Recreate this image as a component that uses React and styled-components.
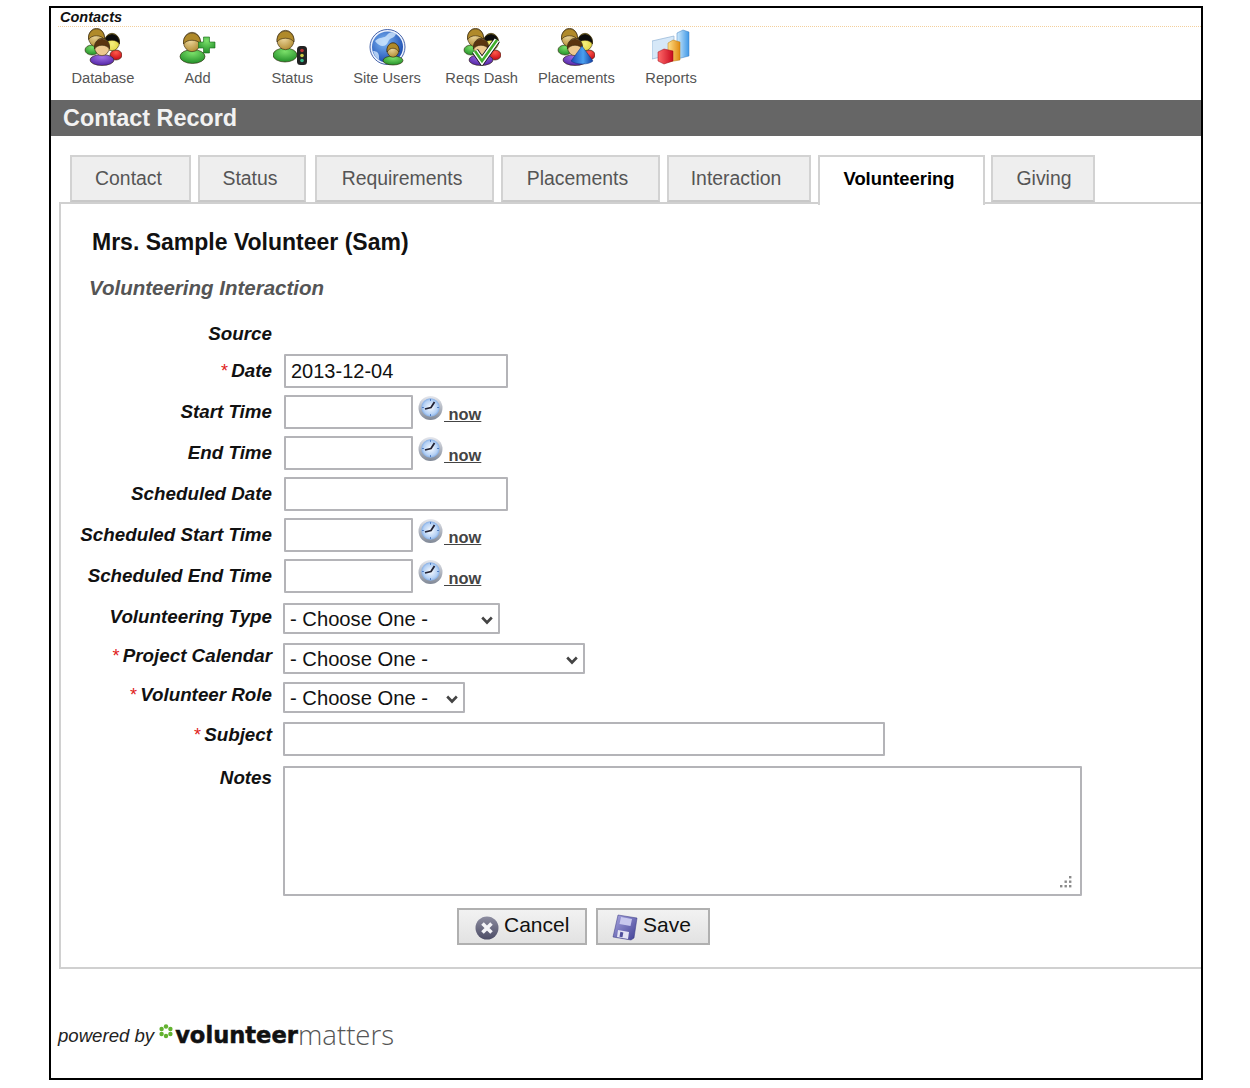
import styled, { createGlobalStyle } from "styled-components";

const GlobalStyle = createGlobalStyle`
	html, body {
		margin: 0;
		padding: 0;
		background: #fff;
		font-family: "Liberation Sans", Arial, sans-serif;
	}
`;

const Page = styled.div`
	padding: 6px 0 0 49px;
`;

const Frame = styled.div`
	box-sizing: border-box;
	width: 1154px;
	height: 1074px;
	border: 2px solid #000;
	display: flex;
	flex-direction: column;
`;

const Toolbar = styled.div`
	height: 92px;
	flex-shrink: 0;
`;

const ToolbarTitle = styled.div`
	margin-left: 7px;
	padding-left: 2px;
	height: 18px;
	line-height: 18px;
	font-size: 14.5px;
	font-weight: bold;
	font-style: italic;
	color: #111;
	border-bottom: 1px dotted #f3cf9c;
`;

const ToolRow = styled.div`
	display: grid;
	grid-template-columns: repeat(7, 94.7px);
	padding: 1px 0 0 4.6px;
`;

const ToolItem = styled.a`
	display: flex;
	flex-direction: column;
	align-items: center;
	gap: 3px;
	font-size: 14.7px;
	line-height: 18px;
	color: #555;
	white-space: nowrap;
	cursor: pointer;
`;

const HeaderBar = styled.div`
	height: 36px;
	flex-shrink: 0;
	padding-left: 12px;
	background: #666;
	color: #f2f2f2;
	font-size: 23.4px;
	font-weight: bold;
	line-height: 37px;
`;

const Tabs = styled.div`
	display: flex;
	gap: 7px;
	margin: 19px 0 0 19px;
	height: 47px;
`;

const Tab = styled.div`
	box-sizing: border-box;
	width: ${(p) => p.$w}px;
	height: ${(p) => (p.$active ? 50 : 47)}px;
	margin-right: ${(p) => p.$after || 0}px;
	padding: 0 ${(p) => p.$right ?? 4}px 0 ${(p) => p.$left || 0}px;
	border: 2px solid #d2d2d2;
	border-bottom: ${(p) => (p.$active ? "none" : "2px solid #c8c8c8")};
	background: ${(p) => (p.$active ? "#fff" : "#eee")};
	color: ${(p) => (p.$active ? "#000" : "#555")};
	font-size: ${(p) => (p.$active ? 18.4 : 19.4)}px;
	font-weight: ${(p) => (p.$active ? "bold" : "normal")};
	line-height: 43px;
	text-align: center;
	position: relative;
	z-index: 1;
`;

const Panel = styled.div`
	margin-left: 8px;
	padding: 25px 0 22px 0;
	border: 2px solid #d0d0d0;
	border-right: none;
	box-sizing: border-box;
`;

const RecordName = styled.h1`
	margin: 0 0 0 31px;
	font-size: 23px;
	font-weight: bold;
	line-height: 26px;
	color: #111;
`;

const SectionTitle = styled.h2`
	margin: 20px 0 22px 28px;
	font-size: 20.5px;
	font-weight: bold;
	font-style: italic;
	line-height: 26px;
	color: #555;
`;

const Row = styled.div`
	display: grid;
	grid-template-columns: 211px 1fr;
	column-gap: 11px;
	margin-top: ${(p) => p.$top || 0}px;
`;

const Label = styled.label`
	padding-top: ${(p) => p.$pad || 0}px;
	font-size: 18.8px;
	font-weight: bold;
	font-style: italic;
	line-height: 22px;
	text-align: right;
	color: #111;
	white-space: nowrap;
`;

const Required = styled.span`
	color: #e02020;
	font-size: 18px;
	font-weight: normal;
	margin-right: 4px;
`;

const Field = styled.div`
	display: flex;
	align-items: flex-start;
	gap: 5px;
	position: relative;
`;

const TextInput = styled.input`
	box-sizing: border-box;
	width: ${(p) => p.$w}px;
	height: 34px;
	margin-left: ${(p) => p.$left || 0}px;
	padding: 2px 5px;
	border: 2px solid #b4b4b8;
	border-radius: 1px;
	background: #fff;
	color: #111;
	font-family: "Liberation Sans", Arial, sans-serif;
	font-size: 20px;
	outline: none;
`;

const chevron =
	"data:image/svg+xml;utf8,<svg xmlns='http://www.w3.org/2000/svg' width='12' height='9'><path d='M1.2 1.5L6 6.5L10.8 1.5' fill='none' stroke='%23444' stroke-width='2.6'/></svg>";

const Select = styled.select`
	box-sizing: border-box;
	appearance: none;
	width: ${(p) => p.$w}px;
	height: 31px;
	padding: 0 5px;
	border: 2px solid #b4b4b8;
	border-radius: 1px;
	background: #fff url("${chevron}") no-repeat right 5px top 11px;
	color: #111;
	font-family: "Liberation Sans", Arial, sans-serif;
	font-size: 20.2px;
	outline: none;
`;

const Notes = styled.textarea`
	box-sizing: border-box;
	display: block;
	width: 799px;
	height: 130px;
	border: 2px solid #b4b4b8;
	border-radius: 1px;
	background: #fff;
	outline: none;
	resize: none;
`;

const Grip = styled.svg`
	position: absolute;
	left: 776px;
	top: 109px;
	width: 14px;
	height: 14px;
`;

const NowLink = styled.a`
	margin: 9px 0 0 -4px;
	font-size: 16.4px;
	font-weight: bold;
	line-height: 20px;
	color: #444;
	text-decoration: underline;
	white-space: pre;
	cursor: pointer;
`;

const Actions = styled.div`
	display: flex;
	gap: 9px;
	margin: 12px 0 0 396px;
`;

const ActionButton = styled.button`
	box-sizing: border-box;
	display: flex;
	align-items: center;
	width: ${(p) => p.$w}px;
	height: 37px;
	padding: 0 0 3px ${(p) => p.$pad}px;
	gap: 5px;
	border: 2px solid #b0b0b0;
	background: linear-gradient(#f2f2f2, #e2e2e2);
	color: #111;
	font-family: "Liberation Sans", Arial, sans-serif;
	font-size: 21px;
	cursor: pointer;
`;

const Footer = styled.div`
	display: flex;
	align-items: flex-end;
	margin: 52px 0 0 7px;
`;

const PoweredBy = styled.span`
	font-size: 18.6px;
	font-style: italic;
	line-height: 24px;
	color: #222;
	margin-right: 5px;
`;

const LogoBold = styled.span`
	font-family: "DejaVu Sans", sans-serif;
	font-size: 22.6px;
	font-weight: bold;
	line-height: 26px;
	color: #111;
	-webkit-text-stroke: 0.5px #111;
	margin-left: 2px;
`;

const LogoLight = styled.span`
	font-family: "Open Sans", sans-serif;
	font-size: 27.6px;
	font-weight: 300;
	line-height: 26px;
	color: #555;
	margin-bottom: 1px;
`;

const SvgDefs = styled.svg`
	position: absolute;
	width: 0;
	height: 0;
`;

const Defs = () => (
	<SvgDefs aria-hidden="true">
		<defs>
			<radialGradient id="skin" cx="40%" cy="35%" r="70%">
				<stop offset="0" stopColor="#f3dfa8" />
				<stop offset="1" stopColor="#b08a30" />
			</radialGradient>
			<radialGradient id="blonde" cx="50%" cy="60%" r="60%">
				<stop offset="0" stopColor="#f7f080" />
				<stop offset="1" stopColor="#dccf30" />
			</radialGradient>
			<radialGradient id="green" cx="50%" cy="25%" r="80%">
				<stop offset="0" stopColor="#7be06a" />
				<stop offset="1" stopColor="#1c8a24" />
			</radialGradient>
			<radialGradient id="red" cx="50%" cy="25%" r="80%">
				<stop offset="0" stopColor="#ff5a4a" />
				<stop offset="1" stopColor="#c00010" />
			</radialGradient>
			<radialGradient id="purple" cx="50%" cy="25%" r="80%">
				<stop offset="0" stopColor="#a070e8" />
				<stop offset="1" stopColor="#4d1fa0" />
			</radialGradient>
			<radialGradient id="globe" cx="40%" cy="35%" r="75%">
				<stop offset="0" stopColor="#7fb8f5" />
				<stop offset="1" stopColor="#0f3fa8" />
			</radialGradient>
			<linearGradient id="cone" x1="0" y1="0" x2="1" y2="0">
				<stop offset="0" stopColor="#1a48b8" />
				<stop offset="0.55" stopColor="#4aa0f0" />
				<stop offset="1" stopColor="#0f3a9c" />
			</linearGradient>
			<radialGradient id="clockFace" cx="50%" cy="50%" r="55%">
				<stop offset="0" stopColor="#f8fbff" />
				<stop offset="0.7" stopColor="#b4d0f4" />
				<stop offset="1" stopColor="#6f9fe0" />
			</radialGradient>
			<linearGradient id="clockRim" x1="0" y1="0" x2="0" y2="1">
				<stop offset="0" stopColor="#e6e8ee" />
				<stop offset="1" stopColor="#808896" />
			</linearGradient>
			<linearGradient id="cancelFill" x1="0" y1="0" x2="0" y2="1">
				<stop offset="0" stopColor="#8d8da0" />
				<stop offset="1" stopColor="#4c4c66" />
			</linearGradient>
			<linearGradient id="floppy" x1="0" y1="0" x2="1" y2="1">
				<stop offset="0" stopColor="#a9a6e0" />
				<stop offset="1" stopColor="#3f3f94" />
			</linearGradient>
			<linearGradient id="barBlue" x1="0" y1="0" x2="1" y2="0">
				<stop offset="0" stopColor="#cfeafc" />
				<stop offset="1" stopColor="#3f98e6" />
			</linearGradient>
			<linearGradient id="barOrange" x1="0" y1="0" x2="1" y2="0">
				<stop offset="0" stopColor="#ffe08a" />
				<stop offset="1" stopColor="#e08a10" />
			</linearGradient>
			<linearGradient id="barRed" x1="0" y1="0" x2="1" y2="0">
				<stop offset="0" stopColor="#ff6a6a" />
				<stop offset="1" stopColor="#c80a1e" />
			</linearGradient>
		</defs>
	</SvgDefs>
);

// head at (x, y), body ellipse at (bx, by)
const Person = ({ x, y, r = 8.5, bx, by, bw = 10, bh = 6, body = "green", skin = "url(#skin)", hair = "#b08a2a" }) => (
	<g stroke="#33240c" strokeWidth="0.6">
		<ellipse cx={bx} cy={by} rx={bw} ry={bh} fill={`url(#${body})`} />
		<ellipse cx={x} cy={y} rx={r} ry={r + 1.2} fill={skin} />
		<path
			d={`M${x - r} ${y + 2} C${x - r - 1} ${y - r - 4} ${x + r + 1} ${y - r - 4} ${x + r} ${y + 2} C${x + r - 3} ${y - 3} ${x - r + 3} ${y - 3} ${x - r} ${y + 2}Z`}
			fill={hair}
		/>
	</g>
);

const Crowd = () => (
	<>
		<Person x={28} y={14} r={7.5} bx={32} by={27} bw={6} bh={5} body="red" skin="url(#blonde)" hair="#0c0c0c" />
		<Person x={12.5} y={9.5} r={8} bx={8} by={22} bw={7} bh={5} body="green" />
		<Person x={18} y={19} r={7.5} bx={18} by={32} bw={12} bh={5.5} body="purple" skin="#edc88f" hair="#5a3410" />
	</>
);

const DatabaseIcon = () => (
	<svg width="38" height="38" viewBox="0 0 38 38">
		<Crowd />
	</svg>
);

const AddIcon = () => (
	<svg width="38" height="38" viewBox="0 0 38 38">
		<Person x={13} y={14} bx={13.5} by={28.5} bw={12.5} bh={7} />
		<path d="M24.5 9h6v5h5.5v6h-5.5v5h-6v-5h-5v-6h5z" fill="url(#green)" stroke="#1a6a1a" strokeWidth="0.6" />
	</svg>
);

const StatusIcon = () => (
	<svg width="38" height="38" viewBox="0 0 38 38">
		<Person x={12.5} y={12} bx={12} by={27} bw={12} bh={7} />
		<rect x="24" y="18" width="10" height="19" rx="3.5" fill="#222" />
		<circle cx="29" cy="22.5" r="1.8" fill="#b33" />
		<circle cx="29" cy="27.5" r="1.8" fill="#cc4" />
		<circle cx="29" cy="32.5" r="1.8" fill="#3b8" />
	</svg>
);

const SiteUsersIcon = () => (
	<svg width="38" height="38" viewBox="0 0 38 38">
		<circle cx="19.5" cy="19" r="17.5" fill="#eef4ff" stroke="#1c3f94" strokeWidth="0.8" />
		<circle cx="19.5" cy="19" r="15.5" fill="url(#globe)" />
		<path d="M7 13c5-5 9-2 12-6s6-3 9-1c-2 5-6 3-8 8s-8 6-13-1zM5 23c4 0 6 2 6 6s1 2 0 3c-3-2-5-5-6-9z" fill="#d8ecff" opacity="0.75" />
		<Person x={25} y={22} r={6} bx={25} by={32.5} bw={10} bh={4.5} />
	</svg>
);

const ReqsIcon = () => (
	<svg width="38" height="38" viewBox="0 0 38 38">
		<Crowd />
		<path d="M12 23l7 10L34 12" fill="none" stroke="#111" strokeWidth="7" />
		<path d="M12 23l7 10L34 12" fill="none" stroke="#fff" strokeWidth="5.4" />
		<path d="M12 23l7 10L34 12" fill="none" stroke="#3fae2a" strokeWidth="2.6" />
	</svg>
);

const PlacementsIcon = () => (
	<svg width="38" height="38" viewBox="0 0 38 38">
		<Crowd />
		<path d="M25 18L36 33c-4 4-17 4-22 0z" fill="url(#cone)" stroke="#0c2f80" strokeWidth="0.5" />
	</svg>
);

const ReportsIcon = () => (
	<svg width="38" height="38" viewBox="0 0 38 38">
		<path d="M0 13l22-5v18L0 31z" fill="#d6e8f8" stroke="#8fb2d4" strokeWidth="0.7" />
		<path d="M25 5l6-3 6 2v24l-12 3z" fill="url(#barBlue)" stroke="#3c7fc0" strokeWidth="0.5" />
		<path d="M16 15l5-3 7 2v18l-12 2z" fill="url(#barOrange)" stroke="#b87a10" strokeWidth="0.5" />
		<path d="M6 24l6-3 9 2v10l-9 3-6-3z" fill="url(#barRed)" stroke="#9a0a18" strokeWidth="0.5" />
	</svg>
);

const ClockIcon = () => (
	<svg width="25" height="26" viewBox="0 0 25 26">
		<circle cx="12.5" cy="13" r="12" fill="url(#clockRim)" />
		<circle cx="12.5" cy="12.5" r="9.2" fill="url(#clockFace)" />
		<path d="M7 14L13 12.5L16.5 7" fill="none" stroke="#223" strokeWidth="1.8" />
		<path d="M12.5 4v2M12.5 19v2M4 12.5h2M19 12.5h2" stroke="#3f6fb8" strokeWidth="0.8" />
	</svg>
);

const CancelIcon = () => (
	<svg width="24" height="24" viewBox="0 0 24 24" style={{ marginTop: 5 }}>
		<circle cx="12" cy="12" r="11.5" fill="url(#cancelFill)" />
		<path d="M7.5 7.5l9 9M16.5 7.5l-9 9" stroke="#f4f4f8" strokeWidth="3.6" />
	</svg>
);

const SaveIcon = () => (
	<svg width="26" height="27" viewBox="0 0 26 27" style={{ marginTop: 5 }}>
		<path d="M6 1l19 3-3 20-3 2L1 23z" fill="url(#floppy)" stroke="#35357f" strokeWidth="0.5" />
		<path d="M9 3l11 2-1.5 7L7.5 10z" fill="#c8c8ee" />
		<path d="M6 16l11 2-1 7-11-2z" fill="#e4e4f4" />
		<rect x="8" y="18" width="3" height="5" fill="#50509c" transform="rotate(10 9 20)" />
	</svg>
);

const FlowerIcon = () => (
	<svg width="14" height="15" viewBox="0 0 14 15" style={{ marginBottom: 9 }}>
		<g fill="#62b22f">
			<circle cx="7" cy="2.5" r="2.2" />
			<circle cx="7" cy="12" r="2.2" />
			<circle cx="2.6" cy="5" r="2.2" />
			<circle cx="11.4" cy="5" r="2.2" />
			<circle cx="2.6" cy="10" r="2.2" />
			<circle cx="11.4" cy="10" r="2.2" />
		</g>
		<circle cx="7" cy="7.3" r="1.4" fill="#fff" />
	</svg>
);

const TOOLS = [
	{ label: "Database", Icon: DatabaseIcon },
	{ label: "Add", Icon: AddIcon },
	{ label: "Status", Icon: StatusIcon },
	{ label: "Site Users", Icon: SiteUsersIcon },
	{ label: "Reqs Dash", Icon: ReqsIcon },
	{ label: "Placements", Icon: PlacementsIcon },
	{ label: "Reports", Icon: ReportsIcon },
];

const TABS = [
	{ label: "Contact", w: 121 },
	{ label: "Status", w: 108, after: 2 },
	{ label: "Requirements", w: 179, right: 5 },
	{ label: "Placements", w: 159, right: 6 },
	{ label: "Interaction", w: 144, right: 6 },
	{ label: "Volunteering", w: 167, active: true, after: -1, right: 5 },
	{ label: "Giving", w: 104, right: 0, left: 2 },
];

const TimeField = () => (
	<Field>
		<TextInput type="text" $w={129} $left={1} />
		<ClockIcon />
		<NowLink> now</NowLink>
	</Field>
);

const App = () => {
	return (
		<Page>
			<GlobalStyle />
			<Defs />
			<Frame>
				<Toolbar>
					<ToolbarTitle>Contacts</ToolbarTitle>
					<ToolRow>
						{TOOLS.map(({ label, Icon }) => (
							<ToolItem key={label}>
								<Icon />
								{label}
							</ToolItem>
						))}
					</ToolRow>
				</Toolbar>

				<HeaderBar>Contact Record</HeaderBar>

				<Tabs>
					{TABS.map((tab) => (
						<Tab key={tab.label} $w={tab.w} $active={tab.active} $after={tab.after} $right={tab.right} $left={tab.left}>
							{tab.label}
						</Tab>
					))}
				</Tabs>

				<Panel>
					<RecordName>Mrs. Sample Volunteer (Sam)</RecordName>
					<SectionTitle>Volunteering Interaction</SectionTitle>

					<Row>
						<Label>Source</Label>
					</Row>
					<Row $top={9}>
						<Label $pad={6}>
							<Required>*</Required>Date
						</Label>
						<Field>
							<TextInput type="text" $w={224} $left={1} defaultValue="2013-12-04" />
						</Field>
					</Row>
					<Row $top={7}>
						<Label $pad={6}>Start Time</Label>
						<TimeField />
					</Row>
					<Row $top={7}>
						<Label $pad={6}>End Time</Label>
						<TimeField />
					</Row>
					<Row $top={7}>
						<Label $pad={6}>Scheduled Date</Label>
						<Field>
							<TextInput type="text" $w={224} $left={1} />
						</Field>
					</Row>
					<Row $top={7}>
						<Label $pad={6}>Scheduled Start Time</Label>
						<TimeField />
					</Row>
					<Row $top={7}>
						<Label $pad={6}>Scheduled End Time</Label>
						<TimeField />
					</Row>
					<Row $top={10}>
						<Label $pad={3}>Volunteering Type</Label>
						<Field>
							<Select $w={217}>
								<option>- Choose One -</option>
							</Select>
						</Field>
					</Row>
					<Row $top={9}>
						<Label $pad={2}>
							<Required>*</Required>Project Calendar
						</Label>
						<Field>
							<Select $w={302}>
								<option>- Choose One -</option>
							</Select>
						</Field>
					</Row>
					<Row $top={8}>
						<Label $pad={2}>
							<Required>*</Required>Volunteer Role
						</Label>
						<Field>
							<Select $w={182}>
								<option>- Choose One -</option>
							</Select>
						</Field>
					</Row>
					<Row $top={9}>
						<Label $pad={2}>
							<Required>*</Required>Subject
						</Label>
						<Field>
							<TextInput type="text" $w={602} />
						</Field>
					</Row>
					<Row $top={10}>
						<Label $pad={1}>Notes</Label>
						<Field>
							<Notes />
							<Grip viewBox="0 0 14 14">
								<g fill="#8a8a8a">
									<rect x="10" y="1" width="2.4" height="2.4" />
									<rect x="5.5" y="5.5" width="2.4" height="2.4" />
									<rect x="10" y="5.5" width="2.4" height="2.4" />
									<rect x="1" y="10" width="2.4" height="2.4" />
									<rect x="5.5" y="10" width="2.4" height="2.4" />
									<rect x="10" y="10" width="2.4" height="2.4" />
								</g>
							</Grip>
						</Field>
					</Row>

					<Actions>
						<ActionButton type="button" $w={130} $pad={16}>
							<CancelIcon />
							Cancel
						</ActionButton>
						<ActionButton type="button" $w={114} $pad={14}>
							<SaveIcon />
							Save
						</ActionButton>
					</Actions>
				</Panel>

				<Footer>
					<PoweredBy>powered by</PoweredBy>
					<FlowerIcon />
					<LogoBold>volunteer</LogoBold>
					<LogoLight>matters</LogoLight>
				</Footer>
			</Frame>
		</Page>
	);
};

export default App;
